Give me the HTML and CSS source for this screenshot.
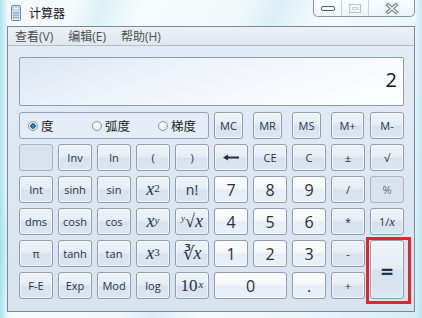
FILE: index.html
```html
<!DOCTYPE html>
<html lang="zh-CN">

<head>
    <meta charset="UTF-8">
    <meta name="viewport" content="width=device-width, initial-scale=1.0">
    <title>计算器</title>
    <link rel="stylesheet" href="styles.css">
</head>

<body>
    <div class="frame">
        <div class="titlebar">
            <div class="title">
                <svg class="app-icon" width="10" height="16" viewBox="0 0 10 16">
                    <rect x="0.5" y="0.5" width="9" height="15" rx="1" fill="#d3e6f4" stroke="#6e8aa5" />
                    <rect x="2" y="2" width="6" height="3" fill="#f4fafe" stroke="#8aa3ba" stroke-width="0.6" />
                    <g fill="#7f9ab3">
                        <rect x="2" y="7" width="1.6" height="1.4" />
                        <rect x="4.2" y="7" width="1.6" height="1.4" />
                        <rect x="6.4" y="7" width="1.6" height="1.4" />
                        <rect x="2" y="9.4" width="1.6" height="1.4" />
                        <rect x="4.2" y="9.4" width="1.6" height="1.4" />
                        <rect x="6.4" y="9.4" width="1.6" height="1.4" />
                        <rect x="2" y="11.8" width="1.6" height="1.4" />
                        <rect x="4.2" y="11.8" width="1.6" height="1.4" />
                        <rect x="6.4" y="11.8" width="1.6" height="1.4" />
                    </g>
                </svg>
                <span class="title-text">计算器</span>
            </div>
            <div class="caption">
                <div class="cap cap-min">
                    <svg width="14" height="6" viewBox="0 0 14 6">
                        <rect x="0.5" y="0.5" width="13" height="4" rx="1.5" fill="#fff" stroke="#4a586a" />
                    </svg>
                </div>
                <div class="cap cap-max">
                    <svg width="12" height="9" viewBox="0 0 12 9">
                        <rect x="0.5" y="0.5" width="11" height="8" fill="none" stroke="#b9c3cf" />
                        <rect x="3.5" y="3.5" width="5" height="2" fill="none" stroke="#c6cfd9" />
                    </svg>
                </div>
                <div class="cap cap-close">
                    <svg width="14" height="11" viewBox="0 0 14 11">
                        <path d="M3 2 L11 9 M11 2 L3 9" stroke="#6b7686" stroke-width="3.6" stroke-linecap="square" />
                        <path d="M3 2 L11 9 M11 2 L3 9" stroke="#fdfdfd" stroke-width="1.5" stroke-linecap="square" />
                    </svg>
                </div>
            </div>
        </div>

        <div class="client">
            <div class="menubar">
                <span class="menu-item">查看(V)</span>
                <span class="menu-item">编辑(E)</span>
                <span class="menu-item">帮助(H)</span>
            </div>

            <div class="content">
                <div class="display">2</div>

                <div class="keypad">
                    <div class="angle-group">
                        <div class="radio radio-deg"><span class="dot checked"></span>度</div>
                        <div class="radio radio-rad"><span class="dot"></span>弧度</div>
                        <div class="radio"><span class="dot"></span>梯度</div>
                    </div>
                    <button class="key mem">MC</button>
                    <button class="key mem">MR</button>
                    <button class="key mem">MS</button>
                    <button class="key mem-wide">M+</button>
                    <button class="key">M-</button>

                    <button class="key off"></button>
                    <button class="key">Inv</button>
                    <button class="key">ln</button>
                    <button class="key">(</button>
                    <button class="key">)</button>
                    <button class="key">
                        <svg width="16" height="7" viewBox="0 0 16 7">
                            <path d="M4 3.5 H16" stroke="#1f2f44" stroke-width="2" />
                            <path d="M0 3.5 L5 0.5 L5 6.5 Z" fill="#1f2f44" />
                        </svg>
                    </button>
                    <button class="key">CE</button>
                    <button class="key">C</button>
                    <button class="key">±</button>
                    <button class="key">√</button>

                    <button class="key">Int</button>
                    <button class="key">sinh</button>
                    <button class="key">sin</button>
                    <button class="key math"><i>x</i><sup>2</sup></button>
                    <button class="key big">n!</button>
                    <button class="key num">7</button>
                    <button class="key num">8</button>
                    <button class="key num">9</button>
                    <button class="key">/</button>
                    <button class="key off">%</button>

                    <button class="key">dms</button>
                    <button class="key">cosh</button>
                    <button class="key">cos</button>
                    <button class="key math"><i>x</i><sup><i>y</i></sup></button>
                    <button class="key math"><sup class="root-idx"><i>y</i></sup>√<i>x</i></button>
                    <button class="key num">4</button>
                    <button class="key num">5</button>
                    <button class="key num">6</button>
                    <button class="key">*</button>
                    <button class="key">1/<i class="serif-x">x</i></button>

                    <button class="key">π</button>
                    <button class="key">tanh</button>
                    <button class="key">tan</button>
                    <button class="key math"><i>x</i><sup>3</sup></button>
                    <button class="key math">∛<i>x</i></button>
                    <button class="key num">1</button>
                    <button class="key num">2</button>
                    <button class="key num">3</button>
                    <button class="key">-</button>
                    <div class="eq-cell">
                        <button class="key eq">=</button>
                        <span class="mark"></span>
                    </div>

                    <button class="key">F-E</button>
                    <button class="key">Exp</button>
                    <button class="key">Mod</button>
                    <button class="key">log</button>
                    <button class="key math ten">10<sup><i>x</i></sup></button>
                    <button class="key num zero">0</button>
                    <button class="key num">.</button>
                    <button class="key">+</button>
                </div>
            </div>
        </div>
    </div>
</body>

</html>
```

FILE: styles.css
```css
* {
    box-sizing: border-box;
}

html,
body {
    margin: 0;
    padding: 0;
}

body {
    width: 422px;
    height: 318px;
    overflow: hidden;
    font-family: "Open Sans", "Noto Sans CJK SC", sans-serif;
    background:
        linear-gradient(to right, rgba(140, 215, 232, 0.7) 0, rgba(140, 215, 232, 0) 8px),
        linear-gradient(to left, rgba(170, 225, 238, 0.6) 0, rgba(170, 225, 238, 0) 7px),
        linear-gradient(112deg, #f3f9fc 0%, #f4fafc 14%, #dcf1f7 19%, #f6fbfd 26%, #f2f9fb 44%, #d9eff6 51%, #f5fafc 59%, #ebf6fa 78%, #d2eef6 100%);
}

.frame {
    height: 318px;
    padding: 0 7px;
    display: flex;
    flex-direction: column;
}

/* title bar */
.titlebar {
    height: 26px;
    display: flex;
    justify-content: space-between;
    align-items: flex-start;
}

.title {
    height: 25px;
    padding-left: 4px;
    display: flex;
    align-items: center;
}

.app-icon {
    margin-right: 8px;
}

.title-text {
    font-family: "Noto Sans CJK SC", sans-serif;
    font-size: 12px;
    color: #111;
}

.caption {
    width: 102px;
    height: 17px;
    display: flex;
    border: 1px solid #8794a5;
    border-top: none;
    border-radius: 0 0 5px 5px;
    background: linear-gradient(rgba(255, 255, 255, 0.75), rgba(235, 244, 249, 0.6));
    overflow: hidden;
}

.cap {
    display: flex;
    justify-content: center;
    align-items: center;
}

.cap-min {
    width: 27px;
    padding-top: 2px;
}

.cap-max {
    width: 27px;
    border-left: 1px solid #c9d2dc;
}

.cap-close {
    flex: 1;
    border-left: 1px solid #c9d2dc;
}

/* client area */
.client {
    height: 286px;
    border: 1px solid #7b889a;
    background: linear-gradient(#e3ebf6, #d8e3f0);
    display: flex;
    flex-direction: column;
}

.menubar {
    height: 19px;
    padding-left: 7px;
    display: flex;
    align-items: center;
    background: linear-gradient(#eef2f7, #e1e7ef);
    border-bottom: 1px solid #b3bcc8;
}

.menu-item {
    margin-right: 15px;
    font-family: "Open Sans", "Noto Sans CJK SC", sans-serif;
    font-size: 12px;
    color: #4d4d4d;
}

.content {
    padding: 11px 10px 0 11px;
}

.display {
    height: 49px;
    margin-bottom: 6px;
    padding: 10px 6px 0 0;
    border: 1px solid #8f9cae;
    border-radius: 2px;
    background: linear-gradient(160deg, #dbe5f2 0%, #eef3fa 35%, #ffffff 100%);
    text-align: right;
    font-size: 20px;
    line-height: 24px;
    color: #151515;
}

/* keys */
.keypad {
    display: grid;
    grid-template-columns: repeat(10, 34px);
    grid-template-rows: repeat(6, 27px);
    gap: 5px;
}

.angle-group {
    grid-column: 1 / span 5;
    display: flex;
    align-items: center;
    padding-left: 8px;
    border: 1px solid #94a2b5;
    border-radius: 3px;
    background: rgba(255, 255, 255, 0.2);
    font-family: "Noto Sans CJK SC", sans-serif;
    font-size: 12.5px;
    color: #1e1e1e;
}

.radio {
    display: flex;
    align-items: center;
}

.radio-deg {
    width: 64px;
}

.radio-rad {
    width: 66px;
}

.dot {
    width: 10px;
    height: 10px;
    margin-right: 3px;
    border-radius: 50%;
    border: 1px solid #8e99a8;
    background: radial-gradient(circle at 40% 35%, #ffffff, #dde3ea);
}

.dot.checked {
    background:
        radial-gradient(circle, #3f9ad0 0, #1c5f8f 2.5px, transparent 3px),
        radial-gradient(circle at 40% 35%, #ffffff, #dde3ea);
}

.key {
    margin: 0;
    padding: 0;
    display: flex;
    justify-content: center;
    align-items: center;
    border: 1px solid #8c9cb1;
    border-radius: 3px;
    background: linear-gradient(#f0f4f9 0%, #e6ecf4 48%, #d8e1ed 52%, #dde5f0 100%);
    box-shadow: inset 0 0 0 1px rgba(255, 255, 255, 0.55);
    font-family: "Open Sans", sans-serif;
    font-size: 11px;
    color: #22344c;
    outline: none;
}

.key.num {
    background: linear-gradient(#fdfeff 0%, #f3f6fa 48%, #e7edf5 52%, #eaf0f7 100%);
    font-size: 16px;
    color: #2a2f36;
}

.key.off {
    border-color: #a7b4c5;
    background: #d9e2ed;
    box-shadow: none;
    color: #5d6b7d;
}

.key.mem {
    width: 29px;
}

.key.mem-wide {
    width: 33px;
}

.key.big {
    font-size: 14px;
}

.key.math {
    font-family: "Liberation Serif", serif;
    font-size: 18px;
}

.key.math sup {
    font-size: 11px;
    position: relative;
    top: -2px;
}

.key.math .root-idx {
    margin-right: 0;
    top: -4px;
    font-size: 9px;
}

.key.ten {
    font-size: 17px;
}

.key.ten sup {
    margin-left: 1px;
}

.serif-x {
    font-family: "Liberation Serif", serif;
    font-size: 13px;
}

.key.zero {
    grid-column: span 2;
}

.eq-cell {
    grid-row: span 2;
    position: relative;
    display: flex;
}

.key.eq {
    flex: 1;
    font-size: 22px;
    font-weight: bold;
    color: #1e3450;
}

.mark {
    position: absolute;
    top: -3px;
    left: -4px;
    right: -7px;
    bottom: -5px;
    border: 3px solid #e3262b;
}
```
